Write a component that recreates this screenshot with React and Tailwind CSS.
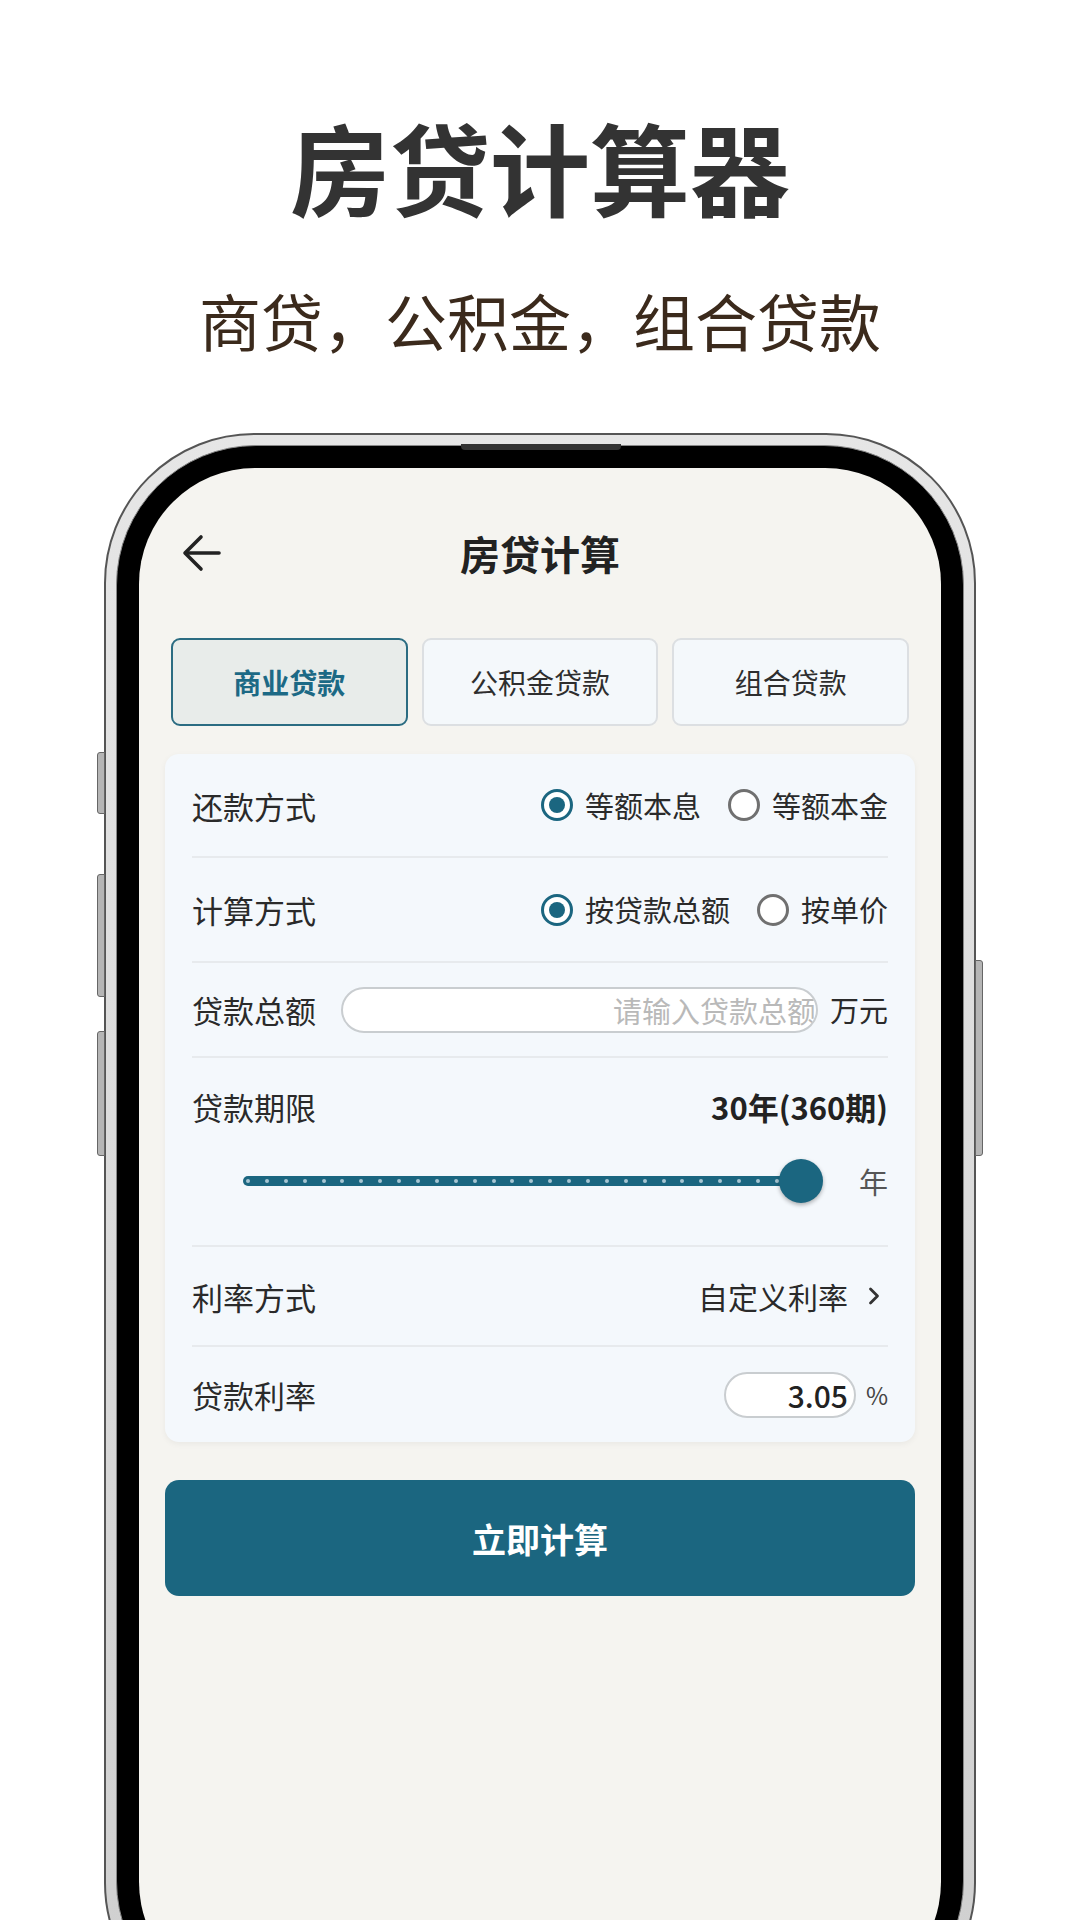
import React, { useState } from 'react';
import { ChevronRight } from 'lucide-react';

const tabs = ['商业贷款', '公积金贷款', '组合贷款'];

const Radio = ({ checked, label, onClick }) => (
  <button onClick={onClick} className="flex items-center gap-[12px]">
    <span
      className={`w-[32px] h-[32px] rounded-full flex items-center justify-center bg-white ${
        checked ? 'border-[3px] border-[#1b6680]' : 'border-[3px] border-[#707070]'
      }`}
    >
      {checked && <span className="w-[16px] h-[16px] rounded-full bg-[#1b6680]"></span>}
    </span>
    <span className="text-[29px] text-[#2a2a2a] leading-none">{label}</span>
  </button>
);

const App = () => {
  const [tab, setTab] = useState(0);
  const [repay, setRepay] = useState(0);
  const [calcMode, setCalcMode] = useState(0);
  const [amount, setAmount] = useState('');
  const [rate, setRate] = useState('3.05');

  return (
    <div className="w-[1080px] h-[1920px] bg-white overflow-hidden flex flex-col items-center font-['Noto_Sans_CJK_SC','Noto_Sans',sans-serif]">
      {/* 标题 */}
      <h1 className="mt-[116px] text-[100px] leading-none font-bold text-[#333333]">房贷计算器</h1>
      <p className="mt-[73px] text-[62px] leading-none text-[#3b2a1c]">商贷，公积金，组合贷款</p>

      {/* 手机外框 */}
      <div className="relative mt-[82px] w-[872px] h-[1600px] shrink-0">
        {/* 侧键 */}
        <div className="absolute left-[-7px] top-[319px] w-[8px] h-[62px] rounded-l-[3px] bg-[#b5b5b5] border border-[#666]"></div>
        <div className="absolute left-[-7px] top-[441px] w-[8px] h-[123px] rounded-l-[3px] bg-[#b5b5b5] border border-[#666]"></div>
        <div className="absolute left-[-7px] top-[598px] w-[8px] h-[125px] rounded-l-[3px] bg-[#b5b5b5] border border-[#666]"></div>
        <div className="absolute right-[-7px] top-[527px] w-[8px] h-[196px] rounded-r-[3px] bg-[#b5b5b5] border border-[#666]"></div>

        <div className="w-full h-full rounded-[150px] border-[2px] border-[#555] bg-gradient-to-b from-[#e6e6e6] to-[#cfcfcf] p-[10px]">
          <div className="relative w-full h-full rounded-[140px] border-[1px] border-[#888] bg-black p-[22px]">
            {/* 听筒 */}
            <div className="absolute left-[344px] top-[-2px] w-[160px] h-[6px] rounded-b-[4px] bg-[#333]"></div>

            {/* 屏幕 */}
            <div className="w-full h-full rounded-[116px] bg-[#f5f4f0] flex flex-col overflow-hidden">
              {/* 顶栏 */}
              <div className="h-[170px] shrink-0 grid grid-cols-[1fr_auto_1fr] items-center">
                <div className="pl-[43px]">
                  <svg width="40" height="38" viewBox="0 0 40 38" fill="none" stroke="#222" strokeWidth="3.6" strokeLinecap="round" strokeLinejoin="round">
                    <path d="M37 19H4" />
                    <path d="M19 3L3 19L19 35" />
                  </svg>
                </div>
                <div className="text-[40px] font-bold text-[#222] leading-none">房贷计算</div>
                <div></div>
              </div>

              {/* 贷款类型 */}
              <div className="px-[32px] grid grid-cols-3 gap-[14px]">
                {tabs.map((t, i) => (
                  <button
                    key={t}
                    onClick={() => setTab(i)}
                    className={`h-[88px] rounded-[9px] border-[2px] text-[28px] leading-none ${
                      tab === i
                        ? 'bg-[#e8ecea] border-[#2b6c82] text-[#1c6985] font-bold'
                        : 'bg-[#f4f8fb] border-[#dcdfe2] text-[#2e2e2e]'
                    }`}
                  >
                    {t}
                  </button>
                ))}
              </div>

              {/* 表单 */}
              <div className="mx-[26px] mt-[28px] px-[27px] rounded-[14px] bg-[#f4f8fc] shadow-[0_2px_6px_rgba(0,0,0,0.05)]">
                <div className="h-[104px] flex items-center justify-between border-b-[2px] border-[#e7eaed]">
                  <span className="text-[31px] text-[#2a2a2a] leading-none">还款方式</span>
                  <div className="flex items-center gap-[27px]">
                    <Radio checked={repay === 0} label="等额本息" onClick={() => setRepay(0)} />
                    <Radio checked={repay === 1} label="等额本金" onClick={() => setRepay(1)} />
                  </div>
                </div>

                <div className="h-[105px] flex items-center justify-between border-b-[2px] border-[#e7eaed]">
                  <span className="text-[31px] text-[#2a2a2a] leading-none">计算方式</span>
                  <div className="flex items-center gap-[27px]">
                    <Radio checked={calcMode === 0} label="按贷款总额" onClick={() => setCalcMode(0)} />
                    <Radio checked={calcMode === 1} label="按单价" onClick={() => setCalcMode(1)} />
                  </div>
                </div>

                <div className="h-[95px] flex items-center border-b-[2px] border-[#e7eaed]">
                  <span className="text-[31px] text-[#2a2a2a] leading-none shrink-0">贷款总额</span>
                  <input
                    value={amount}
                    onChange={(e) => setAmount(e.target.value)}
                    placeholder="请输入贷款总额"
                    className="ml-[25px] w-[477px] h-[46px] rounded-full border-[2px] border-[#c9cdd0] bg-white pl-[16px] pr-0 text-right text-[29px] text-[#222] placeholder:text-[#b9b9b9] outline-none"
                  />
                  <span className="ml-auto text-[29px] text-[#2a2a2a] leading-none">万元</span>
                </div>

                <div className="h-[189px] flex flex-col border-b-[2px] border-[#e7eaed]">
                  <div className="h-[96px] shrink-0 flex items-center justify-between">
                    <span className="text-[31px] text-[#2a2a2a] leading-none">贷款期限</span>
                    <span className="text-[31px] font-bold text-[#222] leading-none">30年(360期)</span>
                  </div>
                  <div className="h-[54px] flex items-center">
                    <div className="ml-[51px] w-[580px] flex items-center">
                      <div className="w-[558px] h-[10px] rounded-full bg-[#1b6680] flex items-center justify-between px-[3px]">
                        {Array.from({ length: 30 }).map((_, i) => (
                          <span key={i} className="w-[4px] h-[4px] rounded-full bg-[#a7c6d2]"></span>
                        ))}
                      </div>
                      <div className="-ml-[22px] w-[44px] h-[44px] shrink-0 rounded-full bg-[#1b6680] shadow-[0_2px_4px_rgba(0,0,0,0.3)]"></div>
                    </div>
                    <span className="ml-auto text-[29px] text-[#555] leading-none">年</span>
                  </div>
                </div>

                <div className="h-[100px] flex items-center justify-between border-b-[2px] border-[#e7eaed]">
                  <span className="text-[31px] text-[#2a2a2a] leading-none">利率方式</span>
                  <div className="flex items-center gap-[12px]">
                    <span className="text-[30px] text-[#2a2a2a] leading-none">自定义利率</span>
                    <ChevronRight size={28} strokeWidth={2.4} color="#333" />
                  </div>
                </div>

                <div className="h-[95px] flex items-center">
                  <span className="text-[31px] text-[#2a2a2a] leading-none">贷款利率</span>
                  <input
                    value={rate}
                    onChange={(e) => setRate(e.target.value)}
                    className="ml-auto w-[132px] h-[46px] rounded-full border-[2px] border-[#c9cdd0] bg-white px-[6px] text-right text-[30px] font-medium text-[#222] outline-none"
                  />
                  <span className="ml-[10px] text-[24px] text-[#444] leading-none">%</span>
                </div>
              </div>

              {/* 计算按钮 */}
              <button className="mx-[26px] mt-[38px] h-[116px] shrink-0 rounded-[14px] bg-[#1b6680] text-white text-[34px] font-bold">
                立即计算
              </button>
            </div>
          </div>
        </div>
      </div>
    </div>
  );
};

export default App;
